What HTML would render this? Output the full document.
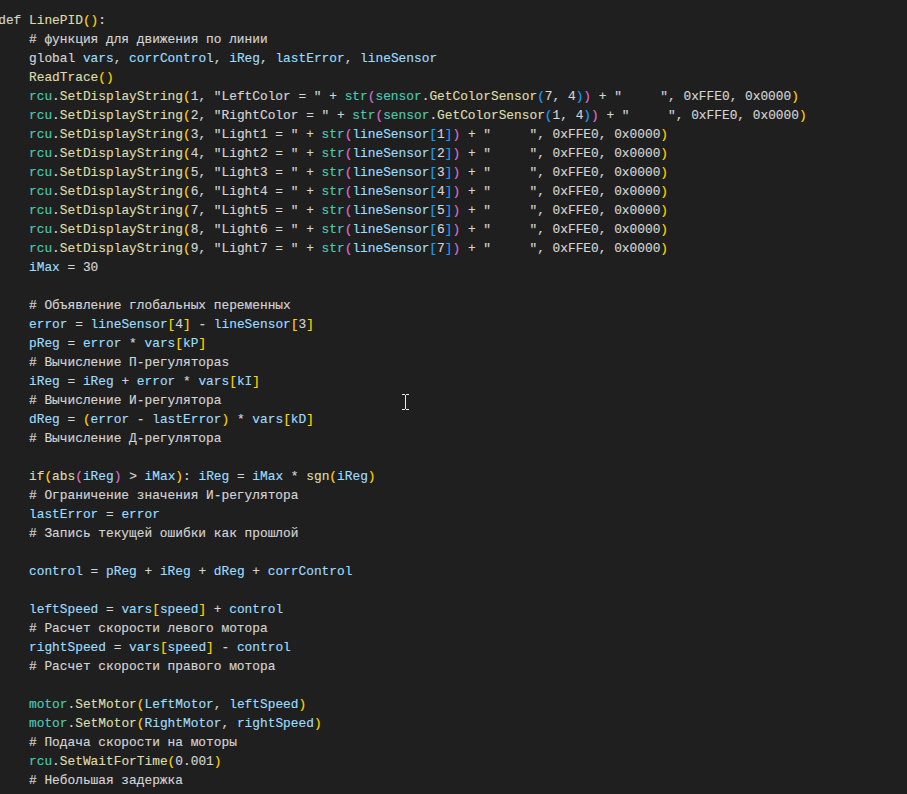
<!DOCTYPE html>
<html lang="ru">
<head>
<meta charset="utf-8">
<title>LinePID</title>
<style>
html,body{margin:0;padding:0;background:#1f1f1f;}
body{width:907px;height:794px;overflow:hidden;position:relative;}
#code{position:absolute;left:-1.8px;top:10.5px;font-family:"Liberation Mono","DejaVu Sans Mono",monospace;font-size:12.83px;line-height:19px;color:#d4d4d4;font-variant-ligatures:none;-webkit-text-stroke:0.15px currentColor;}
.l{height:19px;white-space:pre;}
.f{color:#dcdcaa}
.v{color:#9cdcfe}
.t{color:#4ec9b0}
.b1{color:#ffd700}
.b2{color:#da70d6}
.b3{color:#179fff}
#cur{position:absolute;left:402px;top:394px;width:7px;height:16px;}
</style>
</head>
<body>
<div id="code">
<div class="l">def <span class="f">LinePID</span><span class="b1">()</span>:</div>
<div class="l">    # функция для движения по линии</div>
<div class="l">    global <span class="v">vars</span>, <span class="v">corrControl</span>, <span class="v">iReg</span>, <span class="v">lastError</span>, <span class="v">lineSensor</span></div>
<div class="l">    <span class="f">ReadTrace</span><span class="b1">()</span></div>
<div class="l">    <span class="t">rcu</span>.<span class="f">SetDisplayString</span><span class="b1">(</span>1, "LeftColor = " + <span class="t">str</span><span class="b2">(</span><span class="t">sensor</span>.<span class="f">GetColorSensor</span><span class="b3">(</span>7, 4<span class="b3">)</span><span class="b2">) </span>+ "     ", 0xFFE0, 0x0000<span class="b1">)</span></div>
<div class="l">    <span class="t">rcu</span>.<span class="f">SetDisplayString</span><span class="b1">(</span>2, "RightColor = " + <span class="t">str</span><span class="b2">(</span><span class="t">sensor</span>.<span class="f">GetColorSensor</span><span class="b3">(</span>1, 4<span class="b3">)</span><span class="b2">) </span>+ "     ", 0xFFE0, 0x0000<span class="b1">)</span></div>
<div class="l">    <span class="t">rcu</span>.<span class="f">SetDisplayString</span><span class="b1">(</span>3, "Light1 = " + <span class="t">str</span><span class="b2">(</span><span class="v">lineSensor</span><span class="b3">[</span>1<span class="b3">]</span><span class="b2">) </span>+ "     ", 0xFFE0, 0x0000<span class="b1">)</span></div>
<div class="l">    <span class="t">rcu</span>.<span class="f">SetDisplayString</span><span class="b1">(</span>4, "Light2 = " + <span class="t">str</span><span class="b2">(</span><span class="v">lineSensor</span><span class="b3">[</span>2<span class="b3">]</span><span class="b2">) </span>+ "     ", 0xFFE0, 0x0000<span class="b1">)</span></div>
<div class="l">    <span class="t">rcu</span>.<span class="f">SetDisplayString</span><span class="b1">(</span>5, "Light3 = " + <span class="t">str</span><span class="b2">(</span><span class="v">lineSensor</span><span class="b3">[</span>3<span class="b3">]</span><span class="b2">) </span>+ "     ", 0xFFE0, 0x0000<span class="b1">)</span></div>
<div class="l">    <span class="t">rcu</span>.<span class="f">SetDisplayString</span><span class="b1">(</span>6, "Light4 = " + <span class="t">str</span><span class="b2">(</span><span class="v">lineSensor</span><span class="b3">[</span>4<span class="b3">]</span><span class="b2">) </span>+ "     ", 0xFFE0, 0x0000<span class="b1">)</span></div>
<div class="l">    <span class="t">rcu</span>.<span class="f">SetDisplayString</span><span class="b1">(</span>7, "Light5 = " + <span class="t">str</span><span class="b2">(</span><span class="v">lineSensor</span><span class="b3">[</span>5<span class="b3">]</span><span class="b2">) </span>+ "     ", 0xFFE0, 0x0000<span class="b1">)</span></div>
<div class="l">    <span class="t">rcu</span>.<span class="f">SetDisplayString</span><span class="b1">(</span>8, "Light6 = " + <span class="t">str</span><span class="b2">(</span><span class="v">lineSensor</span><span class="b3">[</span>6<span class="b3">]</span><span class="b2">) </span>+ "     ", 0xFFE0, 0x0000<span class="b1">)</span></div>
<div class="l">    <span class="t">rcu</span>.<span class="f">SetDisplayString</span><span class="b1">(</span>9, "Light7 = " + <span class="t">str</span><span class="b2">(</span><span class="v">lineSensor</span><span class="b3">[</span>7<span class="b3">]</span><span class="b2">) </span>+ "     ", 0xFFE0, 0x0000<span class="b1">)</span></div>
<div class="l">    <span class="v">iMax </span>= 30</div>
<div class="l">&nbsp;</div>
<div class="l">    # Объявление глобальных переменных</div>
<div class="l">    <span class="v">error </span>= <span class="v">lineSensor</span><span class="b1">[</span>4<span class="b1">] </span>- <span class="v">lineSensor</span><span class="b1">[</span>3<span class="b1">]</span></div>
<div class="l">    <span class="v">pReg </span>= <span class="v">error </span>* <span class="v">vars</span><span class="b1">[</span><span class="v">kP</span><span class="b1">]</span></div>
<div class="l">    # Вычисление П-регулятораs</div>
<div class="l">    <span class="v">iReg </span>= <span class="v">iReg </span>+ <span class="v">error </span>* <span class="v">vars</span><span class="b1">[</span><span class="v">kI</span><span class="b1">]</span></div>
<div class="l">    # Вычисление И-регулятора</div>
<div class="l">    <span class="v">dReg </span>= <span class="b1">(</span><span class="v">error </span>- <span class="v">lastError</span><span class="b1">) </span>* <span class="v">vars</span><span class="b1">[</span><span class="v">kD</span><span class="b1">]</span></div>
<div class="l">    # Вычисление Д-регулятора</div>
<div class="l">&nbsp;</div>
<div class="l">    <span class="f">if</span><span class="b1">(</span><span class="f">abs</span><span class="b2">(</span><span class="v">iReg</span><span class="b2">) </span>&gt; <span class="v">iMax</span><span class="b1">)</span>: <span class="v">iReg </span>= <span class="v">iMax </span>* <span class="f">sgn</span><span class="b1">(</span><span class="v">iReg</span><span class="b1">)</span></div>
<div class="l">    # Ограничение значения И-регулятора</div>
<div class="l">    <span class="v">lastError </span>= <span class="v">error</span></div>
<div class="l">    # Запись текущей ошибки как прошлой</div>
<div class="l">&nbsp;</div>
<div class="l">    <span class="v">control </span>= <span class="v">pReg </span>+ <span class="v">iReg </span>+ <span class="v">dReg </span>+ <span class="v">corrControl</span></div>
<div class="l">&nbsp;</div>
<div class="l">    <span class="v">leftSpeed </span>= <span class="v">vars</span><span class="b1">[</span><span class="v">speed</span><span class="b1">] </span>+ <span class="v">control</span></div>
<div class="l">    # Расчет скорости левого мотора</div>
<div class="l">    <span class="v">rightSpeed </span>= <span class="v">vars</span><span class="b1">[</span><span class="v">speed</span><span class="b1">] </span>- <span class="v">control</span></div>
<div class="l">    # Расчет скорости правого мотора</div>
<div class="l">&nbsp;</div>
<div class="l">    <span class="t">motor</span>.<span class="f">SetMotor</span><span class="b1">(</span><span class="v">LeftMotor</span>, <span class="v">leftSpeed</span><span class="b1">)</span></div>
<div class="l">    <span class="t">motor</span>.<span class="f">SetMotor</span><span class="b1">(</span><span class="v">RightMotor</span>, <span class="v">rightSpeed</span><span class="b1">)</span></div>
<div class="l">    # Подача скорости на моторы</div>
<div class="l">    <span class="t">rcu</span>.<span class="f">SetWaitForTime</span><span class="b1">(</span>0.001<span class="b1">)</span></div>
<div class="l">    # Небольшая задержка</div>
</div>
<svg id="cur" viewBox="0 0 7 16" shape-rendering="crispEdges">
<rect x="0" y="0" width="3" height="1" fill="#e8e8e8"/><rect x="4" y="0" width="3" height="1" fill="#e8e8e8"/>
<rect x="3" y="1" width="1" height="14" fill="#e8e8e8"/>
<rect x="0" y="15" width="3" height="1" fill="#e8e8e8"/><rect x="4" y="15" width="3" height="1" fill="#e8e8e8"/>
</svg>
</body>
</html>
